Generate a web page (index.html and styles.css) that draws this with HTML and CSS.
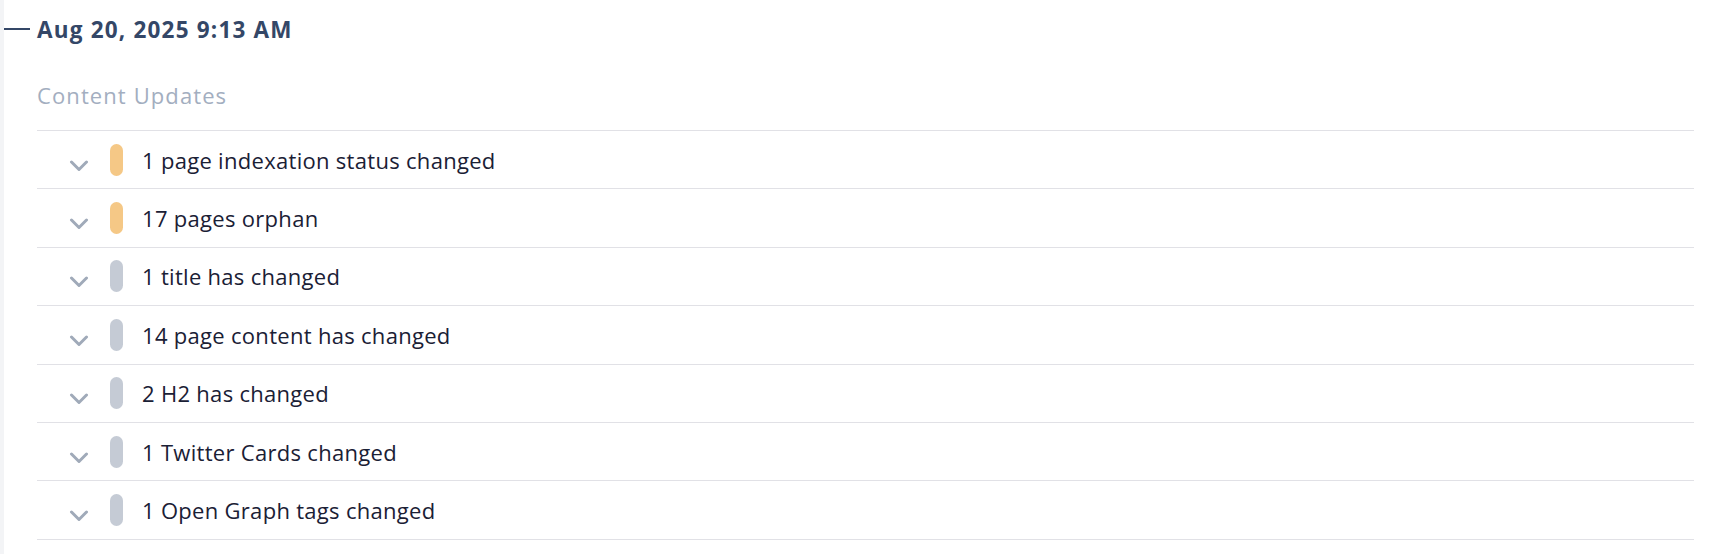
FILE: index.html
```html
<!doctype html>
<html lang="en">
<head>
<meta charset="utf-8">
<title>History</title>
<meta name="viewport" content="width=device-width, initial-scale=1">
<link rel="stylesheet" href="styles.css">
</head>
<body>

<div class="timeline">
	<div class="tl-item">
		<div class="tl-head">
			<span class="tl-dash"></span>
			<h2 class="tl-date">Aug 20, 2025 9:13 AM</h2>
		</div>

		<div class="tl-body">
			<div class="group-title">Content Updates</div>

			<ul class="changes">
				<li class="change">
					<svg class="chev" viewBox="0 0 20 12"><polyline points="2.5,2 10,9.5 17.5,2"/></svg>
					<span class="pill warn"></span>
					<span class="label">1 page indexation status changed</span>
				</li>
				<li class="change">
					<svg class="chev" viewBox="0 0 20 12"><polyline points="2.5,2 10,9.5 17.5,2"/></svg>
					<span class="pill warn"></span>
					<span class="label">17 pages orphan</span>
				</li>
				<li class="change">
					<svg class="chev" viewBox="0 0 20 12"><polyline points="2.5,2 10,9.5 17.5,2"/></svg>
					<span class="pill"></span>
					<span class="label">1 title has changed</span>
				</li>
				<li class="change">
					<svg class="chev" viewBox="0 0 20 12"><polyline points="2.5,2 10,9.5 17.5,2"/></svg>
					<span class="pill"></span>
					<span class="label">14 page content has changed</span>
				</li>
				<li class="change">
					<svg class="chev" viewBox="0 0 20 12"><polyline points="2.5,2 10,9.5 17.5,2"/></svg>
					<span class="pill"></span>
					<span class="label">2 H2 has changed</span>
				</li>
				<li class="change">
					<svg class="chev" viewBox="0 0 20 12"><polyline points="2.5,2 10,9.5 17.5,2"/></svg>
					<span class="pill"></span>
					<span class="label">1 Twitter Cards changed</span>
				</li>
				<li class="change">
					<svg class="chev" viewBox="0 0 20 12"><polyline points="2.5,2 10,9.5 17.5,2"/></svg>
					<span class="pill"></span>
					<span class="label">1 Open Graph tags changed</span>
				</li>
			</ul>
		</div>
	</div>
</div>

</body>
</html>
```

FILE: styles.css
```css
html, body {margin: 0; padding: 0; background: #fff;}
body {
	font-family: "Open Sans", "Noto Sans", sans-serif;
	color: #1a2035;
}

/* 縦のライン */
.timeline {
	border-left: 4px solid #f3f4f6;
	min-height: 554px;
	box-sizing: border-box;
	padding-right: 18px;
}

.tl-head {
	display: flex;
	align-items: center;
	height: 58px;
}
.tl-dash {
	width: 26px;
	height: 2px;
	background: #344767;
	margin-right: 7px;
}
.tl-date {
	margin: 0;
	font-size: 22.5px;
	font-weight: 700;
	color: #344767;
	letter-spacing: 1.2px;
}

.tl-body {padding-left: 33px;}

.group-title {
	font-size: 22px;
	color: #a3aec0;
	height: 64px;
	padding-top: 8px;
	line-height: 58px;
	letter-spacing: 1.1px;
}

.changes {
	list-style: none;
	margin: 0;
	padding: 0;
	border-bottom: 1px solid #e1e1e6;
}
.change {
	display: flex;
	align-items: center;
	height: 58.4px;
	box-sizing: border-box;
	border-top: 1px solid #e1e1e6;
	padding-left: 32px;
}

.chev {
	width: 20px;
	height: 12px;
	margin-top: 12px;
	fill: none;
	stroke: #a0aab9;
	stroke-width: 3;
	stroke-linecap: round;
	stroke-linejoin: round;
}

.pill {
	width: 13px;
	height: 32px;
	border-radius: 7px;
	background: #c5cbd5;
	margin-left: 21px;
}
.pill.warn {background: #f5c886;}

.label {
	margin-left: 19px;
	font-size: 22px;
	letter-spacing: 0.3px;
}
```
